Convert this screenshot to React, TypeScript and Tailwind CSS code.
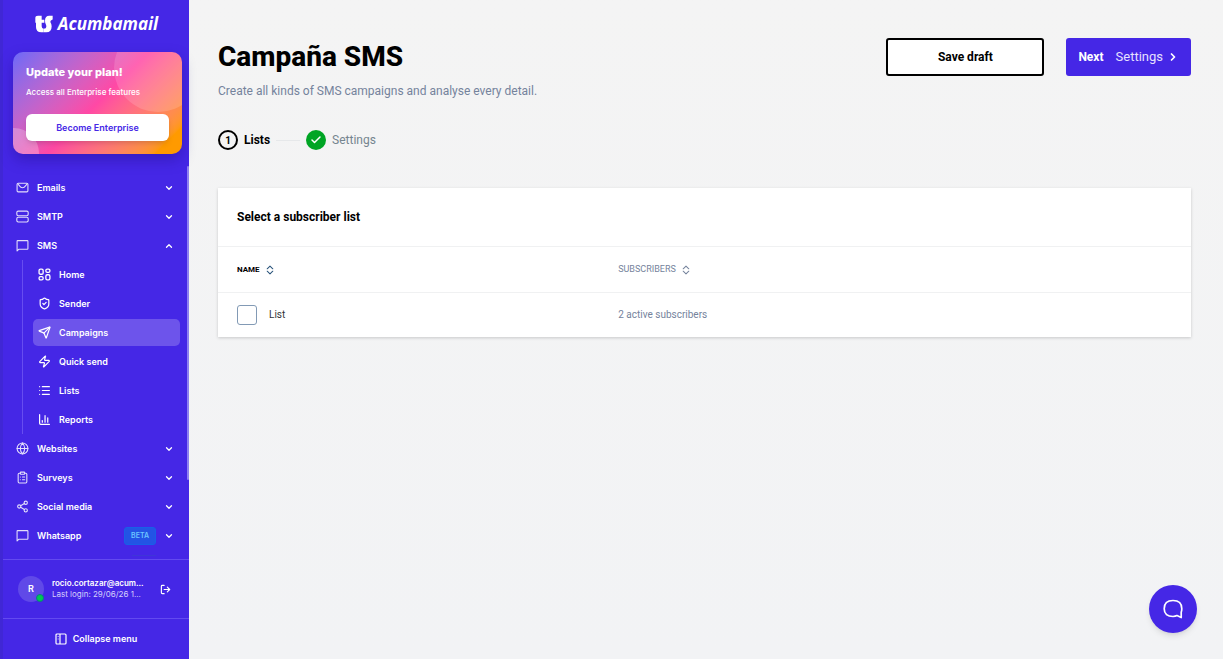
import { useState } from 'react';
import type { ComponentType } from 'react';
import {
    ChartColumn,
    Check,
    ChevronDown,
    ChevronRight,
    ChevronUp,
    ClipboardList,
    Globe,
    List,
    LogOut,
    Send,
    Share2,
    ShieldCheck,
    Zap,
} from 'lucide-react';

type Icon = ComponentType<{ className?: string; strokeWidth?: number }>;

interface MenuItem {
    label: string;
    icon: Icon;
    badge?: string;
    children?: { label: string; icon: Icon; active?: boolean }[];
}

const MENU: MenuItem[] = [
    { label: 'Emails', icon: MailIcon },
    { label: 'SMTP', icon: ServerIcon },
    {
        label: 'SMS',
        icon: MessageIcon,
        children: [
            { label: 'Home', icon: HomeIcon },
            { label: 'Sender', icon: ShieldCheck },
            { label: 'Campaigns', icon: Send, active: true },
            { label: 'Quick send', icon: Zap },
            { label: 'Lists', icon: List },
            { label: 'Reports', icon: ChartColumn },
        ],
    },
    { label: 'Websites', icon: Globe },
    { label: 'Surveys', icon: ClipboardList },
    { label: 'Social media', icon: Share2 },
    { label: 'Whatsapp', icon: MessageIcon, badge: 'BETA' },
];

function MessageIcon({ className }: { className?: string }) {
    return (
        <svg viewBox="0 0 24 24" className={className} fill="none" stroke="currentColor" strokeWidth="2" strokeLinejoin="round">
            <path d="M2 22V4a1 1 0 0 1 1-1h18a1 1 0 0 1 1 1v14a1 1 0 0 1-1 1H5z" />
        </svg>
    );
}

function MailIcon({ className }: { className?: string }) {
    return (
        <svg viewBox="0 0 24 24" className={className} fill="none" stroke="currentColor" strokeWidth="2" strokeLinejoin="round">
            <rect x="2" y="4" width="20" height="16" rx="2" />
            <path d="M3 5c3 2.500 4.500 7.500 9 7.500S18 7.500 21 5" />
        </svg>
    );
}

function ServerIcon({ className }: { className?: string }) {
    return (
        <svg viewBox="0 0 24 24" className={className} fill="none" stroke="currentColor" strokeWidth="2">
            <rect x="1.500" y="2" width="21" height="8.500" rx="2.500" />
            <rect x="1.500" y="13.500" width="21" height="8.500" rx="2.500" />
        </svg>
    );
}

function HomeIcon({ className }: { className?: string }) {
    return (
        <svg viewBox="0 0 24 24" className={className} fill="none" stroke="currentColor" strokeWidth="2.400">
            <rect x="2" y="2" width="7.500" height="9.500" rx="2.500" />
            <rect x="14.500" y="2" width="7.500" height="6" rx="2.500" />
            <rect x="2" y="16" width="7.500" height="6" rx="2.500" />
            <rect x="14.500" y="12.500" width="7.500" height="9.500" rx="2.500" />
        </svg>
    );
}

function CollapseIcon() {
    return (
        <svg viewBox="0 0 24 24" className="size-3" fill="none" stroke="currentColor" strokeWidth="2.400" strokeLinejoin="round">
            <rect x="2" y="2" width="20" height="20" rx="2" />
            <path d="M10 2v20M5.500 7h1.500M5.500 12h1.500" />
        </svg>
    );
}

function Logo() {
    return (
        <a href="#" className="flex items-center justify-center gap-[5px] pt-3 pl-1 text-white">
            <svg viewBox="0 0 54 54" className="size-[18px]" fill="currentColor" aria-hidden="true">
                <path d="M1 9Q1 2 9 2H20V14H28V23H20V34Q20 41 26 41L26 52H19Q3 52 3 36V23H1Z" />
                <path d="M53 2V12Q53 15 50 15Q46 16 46 21Q50 27 50 34Q50 52 34 52H26V41Q34 41 34 35Q34 31 32 27Q30 22 30 17Q30 2 43 2Z" />
            </svg>
            <span className="font-['Open_Sans','Noto_Sans',sans-serif] text-[17px] leading-6 font-bold italic">Acumbamail</span>
        </a>
    );
}

function PlanCard() {
    return (
        <section className="relative mx-[7px] mt-4 ml-[13px] overflow-hidden rounded-[10px] bg-linear-135 from-[#6b68f8] via-[#ff48a5] via-50% to-[#ff9a00] to-90% px-[13px] pt-[11px] pb-[13px] text-white shadow-[0_6px_14px_rgba(30,10,120,0.35)]">
            <span className="absolute -top-7 -right-5 size-[88px] rounded-full bg-white/15" />
            <span className="absolute -bottom-6 -left-6 size-[50px] rounded-full bg-white/25" />
            <h2 className="relative text-[11px] leading-[18px] font-extrabold">Update your plan!</h2>
            <p className="relative mt-[5px] text-[8px] leading-3 font-medium">Access all Enterprise features</p>
            <button className="relative mt-4 h-[27px] w-full rounded-md bg-white text-[9px] font-semibold text-[#4527e6] shadow-md">
                Become Enterprise
            </button>
        </section>
    );
}

function Sidebar() {
    const [openMenu, setOpenMenu] = useState<string | null>('SMS');

    return (
        <aside className="flex h-screen w-[189px] shrink-0 flex-col border-l-3 border-[#4027d5] bg-[#4527e6] font-['Inter',sans-serif] text-white">
            <div className="-ml-[3px]">
                <Logo />
                <PlanCard />
            </div>
            <nav className="relative mt-3 min-h-0 flex-1 overflow-hidden pt-[7px] pr-[9px] pl-[13px] text-[9px] font-semibold">
                <span className="absolute top-0 right-0 h-4/5 w-0.5 rounded-full bg-[#8f80f2]" />
                {MENU.map(({ label, icon: ItemIcon, badge, children }) => {
                    const isOpen = openMenu === label;
                    return (
                        <div key={label}>
                            <button
                                onClick={() => setOpenMenu(isOpen ? null : label)}
                                className="flex h-[29px] w-full items-center pr-[6px] text-left"
                            >
                                <ItemIcon className="size-[13px] opacity-85" />
                                <span className="ml-2 flex-1">{label}</span>
                                {badge && (
                                    <span className="mr-2 rounded-[3px] border border-[#1760e8] bg-[#2354e5] px-1.5 text-[7px] leading-4 text-[#6cc5ff]">
                                        {badge}
                                    </span>
                                )}
                                {isOpen ? <ChevronUp className="size-[10px]" strokeWidth={3} /> : <ChevronDown className="size-[10px]" strokeWidth={3} />}
                            </button>
                            {isOpen && children && (
                                <ul className="ml-[6px] border-l border-[#674df0] pl-[10px]">
                                    {children.map(({ label: name, icon: ChildIcon, active }) => (
                                        <li key={name} className="flex h-[29px] items-center">
                                            <a
                                                href="#"
                                                className={`flex h-[27px] w-full items-center gap-2 rounded-[5px] pl-[5px] ${active ? 'bg-[#6d54eb]' : ''}`}
                                            >
                                                <ChildIcon className="size-[13px]" strokeWidth={2.2} />
                                                {name}
                                            </a>
                                        </li>
                                    ))}
                                </ul>
                            )}
                        </div>
                    );
                })}
                <div className="mt-[5px] mr-6 ml-auto h-px w-6 bg-[#3f35d8]" />
            </nav>
            <div className="flex h-[59px] items-center border-t border-[#634af0] pl-[15px]">
                <div className="relative flex size-[26px] shrink-0 items-center justify-center rounded-full bg-[#6049e8] text-[9px] font-semibold">
                    R
                    <span className="absolute right-0 bottom-0 size-2 rounded-full border border-[#087f80] bg-[#00c853]" />
                </div>
                <div className="ml-2 w-[94px] text-[8px] leading-[11px] whitespace-nowrap">
                    <p className="font-semibold">rocio.cortazar@acum...</p>
                    <p className="text-[#d5cffc]">Last login: 29/06/26 1...</p>
                </div>
                <button className="ml-[14px]" aria-label="Log out">
                    <LogOut className="size-[11px]" strokeWidth={2.5} />
                </button>
            </div>
            <button className="flex h-[41px] items-center justify-center gap-1.5 border-t border-[#634af0] text-[9px] font-semibold">
                <CollapseIcon />
                Collapse menu
            </button>
        </aside>
    );
}

function SortIcon() {
    return (
        <svg viewBox="0 0 10 12" className="h-2.5 w-2" fill="none" stroke="currentColor" strokeWidth="1.300" strokeLinecap="round" strokeLinejoin="round">
            <path d="M1.500 4.500 5 1.200l3.500 3.300M1.500 7.500 5 10.800l3.500-3.300" />
        </svg>
    );
}

function Steps() {
    return (
        <ol className="mt-[29px] flex h-5 items-center text-[12px]">
            <li className="flex items-center gap-1.5 font-bold text-black">
                <span className="flex size-5 items-center justify-center rounded-full border-2 border-black text-[10px]">1</span>
                Lists
            </li>
            <li className="ml-1.5 flex items-center gap-1.5 text-[#75858f]">
                <span className="h-px w-6 bg-[#e6e8ea]" />
                <span className="flex size-5 items-center justify-center rounded-full bg-[#00a524] text-white">
                    <Check className="size-3" strokeWidth={3} />
                </span>
                Settings
            </li>
        </ol>
    );
}

function SubscriberLists() {
    return (
        <section className="mt-[38px] bg-white shadow-[0_1px_3px_rgba(0,0,0,0.18)]">
            <h2 className="px-[19px] py-5 text-[12px] leading-[18px] font-bold text-black">Select a subscriber list</h2>
            <table className="w-full table-fixed border-collapse text-left">
                <thead>
                    <tr className="h-[46px] border-y border-[#f0f1f2] text-[8px]">
                        <th className="w-2/5 pl-[19px] font-bold text-black">
                            <button className="flex items-center gap-1.5">
                                NAME
                                <span className="text-[#28527a]"><SortIcon /></span>
                            </button>
                        </th>
                        <th className="pl-[11px] text-[9px] font-normal text-[#75839c]">
                            <button className="flex items-center gap-1.5">
                                SUBSCRIBERS
                                <SortIcon />
                            </button>
                        </th>
                    </tr>
                </thead>
                <tbody>
                    <tr className="h-11 text-[10px]">
                        <td className="pl-[19px]">
                            <label className="flex items-center gap-3 text-[#303238]">
                                <input type="checkbox" className="size-5 appearance-none rounded-[3px] border border-[#829ab5] bg-white checked:bg-[#4527e6]" />
                                List
                            </label>
                        </td>
                        <td className="pl-[11px] text-[#75839c]">2 active subscribers</td>
                    </tr>
                </tbody>
            </table>
        </section>
    );
}

export default function App() {
    return (
        <div className="flex h-screen bg-[#f4f4f4] font-['Roboto',sans-serif]">
            <Sidebar />
            <main className="min-w-0 flex-1 bg-linear-to-b from-[#f4f4f4] to-[#f2f3f5] pt-[38px] pr-8 pl-[29px]">
                <header className="flex items-start justify-between">
                    <div>
                        <h1 className="text-[28px] leading-[38px] font-extrabold text-black">Campaña SMS</h1>
                        <p className="mt-[5px] text-[12px] leading-5 text-[#75839c]">Create all kinds of SMS campaigns and analyse every detail.</p>
                    </div>
                    <div className="flex gap-[22px]">
                        <button className="h-[38px] w-[158px] rounded-[3px] border-2 border-black bg-white text-[12px] font-bold text-black">Save draft</button>
                        <button className="flex h-[38px] items-center rounded-[3px] bg-[#4527e6] px-3 text-[13px] text-white">
                            <span className="mr-3 text-[12px] font-bold">Next</span>
                            <span className="text-[#e5e0ff]">Settings</span>
                            <ChevronRight className="ml-1 size-3" strokeWidth={3.5} />
                        </button>
                    </div>
                </header>
                <Steps />
                <SubscriberLists />
            </main>
            <button
                aria-label="Open chat"
                className="fixed right-[26px] bottom-[26px] flex size-12 items-center justify-center rounded-full bg-[#4527e6] text-white shadow-md"
            >
                <svg viewBox="0 0 20 20" className="size-5" fill="none" stroke="currentColor" strokeWidth="1.700" strokeLinejoin="round">
                    <path d="M18.200 18.500v-5.200c.4-1.200.6-2.300.6-3.600C18.800 4.500 15.500 1.500 10 1.500S1.200 4.500 1.200 9.700 4.500 17.500 10 17.500c1.500 0 2.900-.3 4-.9z" />
                </svg>
            </button>
        </div>
    );
}
